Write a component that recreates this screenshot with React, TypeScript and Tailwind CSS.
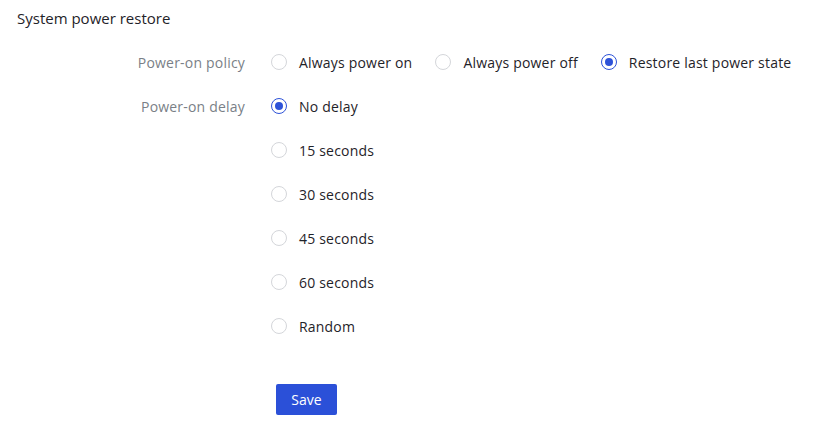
import React, { useState } from 'react';

const font = { fontFamily: '"Open Sans", "Noto Sans", Arial, sans-serif' };

const Radio: React.FC<{ checked: boolean; label: string; onClick: () => void }> = ({ checked, label, onClick }) => (
  <label className="flex items-center cursor-pointer" onClick={onClick}>
    <span
      className={
        checked
          ? 'w-4 h-4 rounded-full border border-[#2d52d8] flex items-center justify-center'
          : 'w-4 h-4 rounded-full border border-[#d4d6da] bg-white'
      }
    >
      {checked && <span className="w-2 h-2 rounded-full bg-[#2d52d8]" />}
    </span>
    <span className="ml-3 text-[14px] tracking-[0.2px] text-[#1f2329]">{label}</span>
  </label>
);

const delays = ['No delay', '15 seconds', '30 seconds', '45 seconds', '60 seconds', 'Random'];
const policies = ['Always power on', 'Always power off', 'Restore last power state'];

export default function App() {
  const [policy, setPolicy] = useState(2);
  const [delay, setDelay] = useState(0);

  return (
    <div className="w-[823px] h-[436px] bg-white" style={font}>
      <div className="pl-[17px] pt-[7px] h-[40px] text-[15px] leading-[22px] text-[#1f2329]">System power restore</div>

      <div className="flex h-[44px] items-center">
        <div className="w-[245px] text-right text-[14px] tracking-[0.2px] text-[#7a7f87]">Power-on policy</div>
        <div className="flex items-center ml-[26px] gap-[23px]">
          {policies.map((p, i) => (
            <Radio key={p} label={p} checked={policy === i} onClick={() => setPolicy(i)} />
          ))}
        </div>
      </div>

      <div className="flex">
        <div className="w-[245px] h-[44px] flex items-center justify-end text-[14px] tracking-[0.2px] text-[#7a7f87]">Power-on delay</div>
        <div className="ml-[26px] flex flex-col">
          {delays.map((d, i) => (
            <div key={d} className="h-[44px] flex items-center">
              <Radio label={d} checked={delay === i} onClick={() => setDelay(i)} />
            </div>
          ))}
        </div>
      </div>

      <div className="pl-[276px] mt-[36px]">
        <button className="w-[61px] h-[31px] rounded-[2px] bg-[#2b50d8] text-white text-[14px]">Save</button>
      </div>
    </div>
  );
}
